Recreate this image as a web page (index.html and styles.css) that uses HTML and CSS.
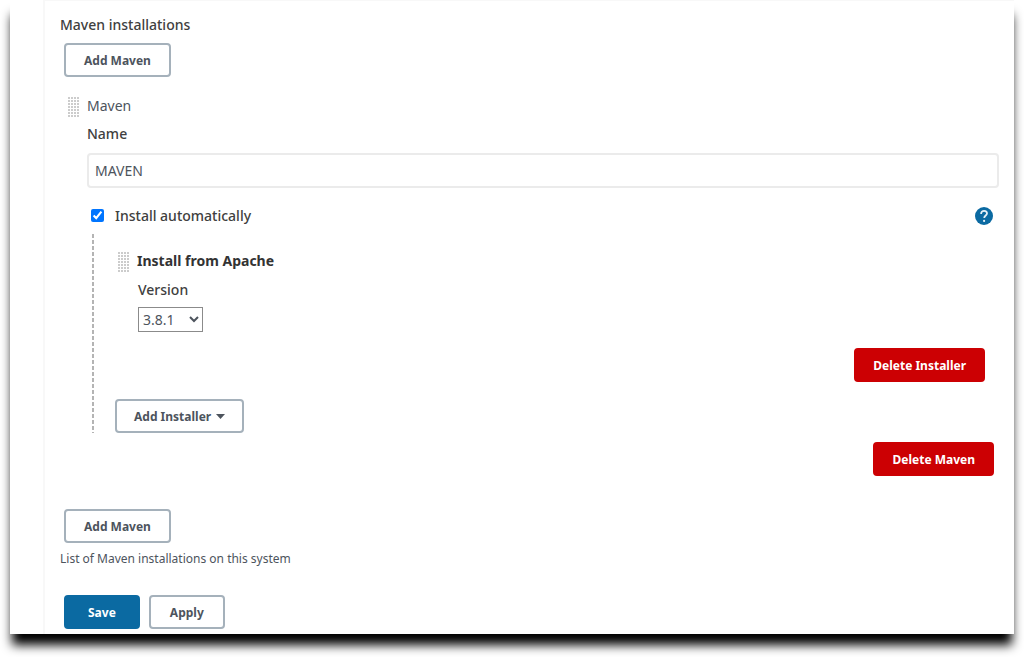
FILE: index.html
```
<!DOCTYPE html>
<html lang="en">

<head>
    <meta charset="UTF-8">
    <meta name="viewport" content="width=device-width, initial-scale=1.0">
    <title>Maven installations</title>
    <link rel="stylesheet" href="styles.css">
</head>

<body>
    <div class="window">
        <form class="config">
            <h1 class="title">Maven installations</h1>
            <button type="button" class="btn add-btn">Add Maven</button>

            <div class="item">
                <div class="item-head">
                    <span class="handle"></span>
                    <span class="item-name">Maven</span>
                </div>
                <div class="item-body">
                    <label class="label" for="name">Name</label>
                    <input class="text-input" id="name" type="text" value="MAVEN">

                    <div class="check-row">
                        <input class="check" id="auto" type="checkbox" checked>
                        <label for="auto">Install automatically</label>
                        <button type="button" class="help" aria-label="Help">
                            <svg width="18" height="18" viewBox="0 0 18 18">
                                <circle cx="9" cy="9" r="9" fill="#0b6aa2" />
                                <path d="M6.1 6.9C6.1 5 7.4 3.8 9.1 3.8s2.9 1 2.9 2.6c0 2-2.8 2.2-2.8 4.6" fill="none" stroke="#e4f0f7" stroke-width="1.8" />
                                <circle cx="9.1" cy="13.9" r="1.1" fill="#e4f0f7" />
                            </svg>
                        </button>
                    </div>

                    <div class="installers">
                        <div class="item-head">
                            <span class="handle"></span>
                            <b class="installer-name">Install from Apache</b>
                        </div>
                        <div class="installer-body">
                            <label class="label" for="version">Version</label>
                            <select class="version" id="version">
                                <option>3.8.1</option>
                            </select>
                        </div>
                        <div class="actions">
                            <button type="button" class="btn danger">Delete Installer</button>
                        </div>
                        <button type="button" class="btn menu-btn">Add Installer
                            <svg width="9" height="5" viewBox="0 0 9 5">
                                <path d="M0 0h9L4.500 5z" fill="#4d545d" />
                            </svg>
                        </button>
                    </div>
                </div>
                <div class="actions item-actions">
                    <button type="button" class="btn danger">Delete Maven</button>
                </div>
            </div>

            <button type="button" class="btn add-btn">Add Maven</button>
            <p class="hint">List of Maven installations on this system</p>

            <div class="footer">
                <button type="submit" class="btn primary">Save</button>
                <button type="button" class="btn apply">Apply</button>
            </div>
        </form>
    </div>
</body>

</html>
```
FILE: styles.css
```
* {
    box-sizing: border-box;
}

body {
    margin: 0;
    background: #fff;
    color: #4d545d;
    font-family: "Noto Sans", "Open Sans", sans-serif;
    font-size: 14px;
    line-height: 20px;
}

.window {
    margin: 0 10px 23px;
    padding-left: 33px;
    background: #fff;
    box-shadow: 0 13px 10px -2px #000;
}

.config {
    padding: 14px 15px 5px;
    border-left: 2px solid #f8f8f8;
    border-top: 1px solid #f8f8f8;
}

.title {
    margin: 0 0 8px;
    font-size: 14px;
    font-weight: 500;
    color: #404040;
}

.btn {
    height: 34px;
    padding: 0 17px;
    border: 2px solid #a5b1bb;
    border-radius: 4px;
    background: #fff;
    color: #4d545d;
    font-family: inherit;
    font-size: 12px;
    font-weight: 700;
}

.add-btn {
    display: block;
    margin-left: 4px;
    padding: 0 18px;
}

.danger {
    border-color: #cc0003;
    background: #cc0003;
    color: #fff;
}

.primary {
    padding: 0 22px;
    border-color: #0b6aa2;
    background: #0b6aa2;
    color: #fff;
}

.apply {
    padding: 0 19px;
}

.item {
    padding: 18px 0 33px 7px;
}

.item-head {
    display: flex;
    align-items: center;
    gap: 8px;
    height: 22px;
}

.handle {
    width: 12px;
    height: 21px;
    background:
        linear-gradient(90deg, #fff 1px, transparent 1px) 0 0 / 3px 3px,
        linear-gradient(#fff 1px, #ccc 1px) 0 0 / 3px 3px;
}

.item-body {
    display: flex;
    flex-direction: column;
    padding: 7px 0 0 20px;
}

.label {
    display: block;
    color: #404040;
    font-weight: 500;
}

.text-input {
    width: 100%;
    height: 35px;
    margin-top: 9px;
    padding: 0 6px;
    border: 2px solid #ebebeb;
    border-radius: 4px;
    color: #4d545d;
    font: inherit;
}

.check-row {
    display: flex;
    align-items: center;
    margin-top: 18px;
    padding: 0 6px 0 4px;
    color: #404040;
    font-weight: 500;
}

.check {
    width: 13px;
    height: 13px;
    margin: 0 11px 2px 0;
}

.help {
    display: flex;
    margin-left: auto;
    padding: 0;
    border: 0;
    background: none;
}

/* dashed guide on the left edge */
.installers {
    margin: 8px 14px 0 5px;
    padding: 16px 0 0 25px;
    background: linear-gradient(#b4b4b4 4px, transparent 4px) 0 0 / 2px 6px repeat-y;
}

.installer-name {
    color: #333;
}

.installer-body {
    padding: 8px 0 0 21px;
}

.version {
    display: block;
    width: 65px;
    height: 25px;
    margin-top: 7px;
    border: 1px solid #8b8b8b;
    border-radius: 0;
    background: #fff;
    color: #4d545d;
    font: inherit;
}

.actions {
    display: flex;
    justify-content: flex-end;
    margin: 16px 0 17px;
}

.item-actions {
    margin: 9px 5px 0 0;
}

.menu-btn {
    margin-left: -2px;
}

.menu-btn svg {
    margin: 0 0 2px 2px;
}

.hint {
    margin: 6px 0 26px;
    font-size: 12px;
}

.footer {
    display: flex;
    gap: 9px;
    margin-left: 4px;
}
```
